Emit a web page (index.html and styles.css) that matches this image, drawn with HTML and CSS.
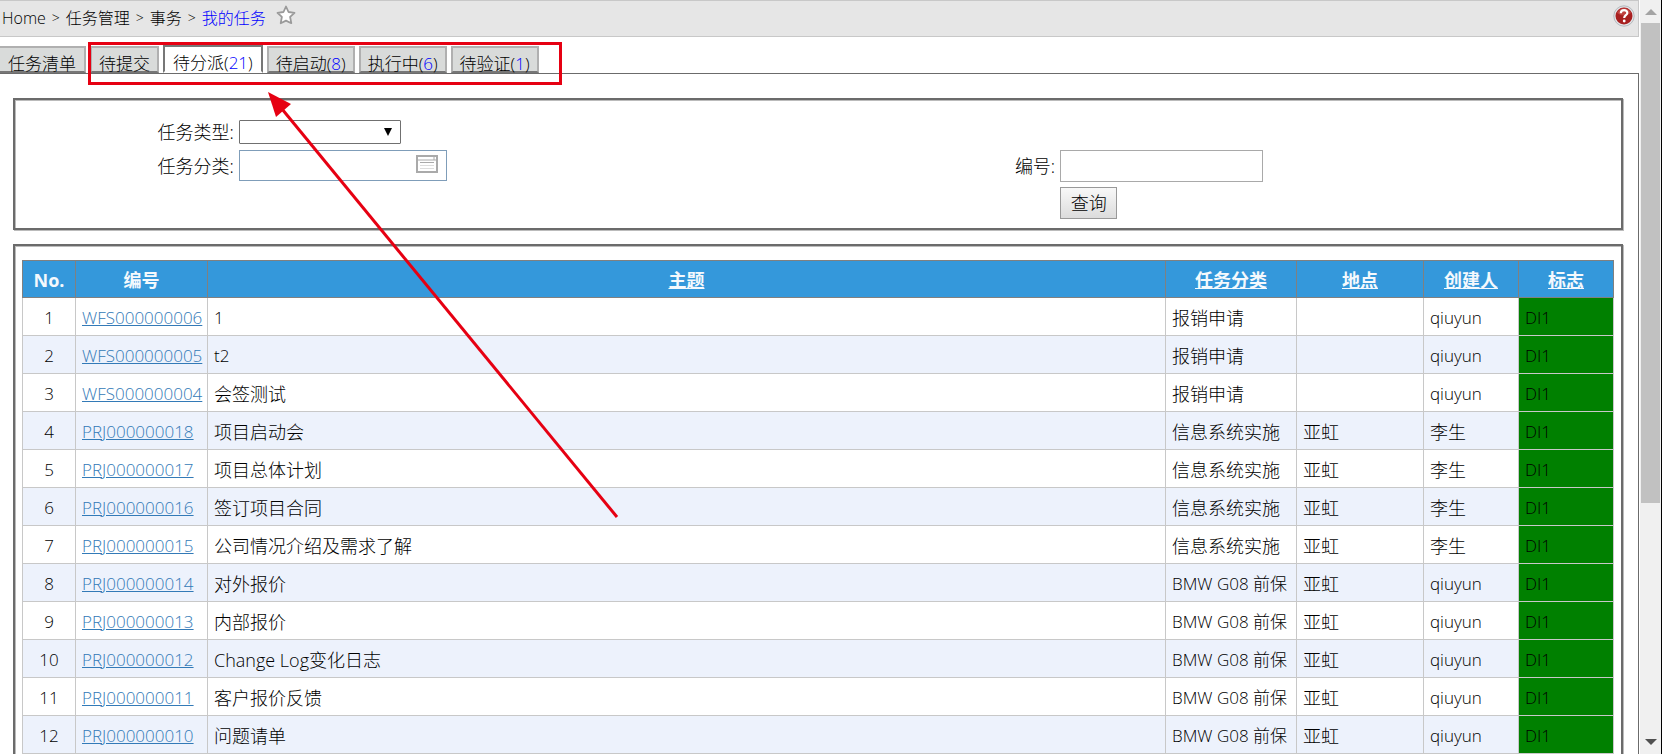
FILE: index.html
```html
<!DOCTYPE html>
<html lang="zh-CN">
<head>
<meta charset="utf-8">
<title>我的任务</title>
<link rel="stylesheet" href="styles.css">
</head>
<body>
<div class="window">
  <div class="page">
    <header class="topbar">
      <nav class="crumbs" aria-label="Breadcrumb">
        <span>Home</span><span class="sep">&gt;</span><span>任务管理</span><span class="sep">&gt;</span><span>事务</span><span class="sep">&gt;</span><a href="#">我的任务</a>
        <button class="icon-button star" aria-label="收藏">
          <svg width="20" height="20" viewBox="0 0 20 20"><path d="M10 1.500 12.500 7l6 .8-4.400 4.100 1.200 6.300L10 15.600l-5.300 2.600 1.200-6.300L1.500 7.800l6-.8z" fill="#fff" stroke="#9a9a9a" stroke-width="1.800" stroke-linejoin="round"/></svg>
        </button>
      </nav>
      <button class="icon-button" aria-label="帮助">
        <svg width="22" height="22" viewBox="0 0 22 22"><circle cx="11" cy="11" r="10.200" fill="#e3e6e9" stroke="#b4b9be"/><circle cx="11" cy="11" r="8.500" fill="#a82020"/><path d="M4 8a7.500 7.500 0 0 1 14 0q-7 5-14 0z" fill="#cf5a55" opacity=".6"/><path d="M7.800 8.300C7.800 4 14.500 4.200 14.300 8c-.1 2.200-3.100 2.300-3.100 5" fill="none" stroke="#fff" stroke-width="2.200"/><circle cx="11.200" cy="16" r="1.400" fill="#fff"/></svg>
      </button>
    </header>

    <nav class="tabs">
      <a class="tab first" href="#">任务清单</a>
      <a class="tab" href="#">待提交</a>
      <a class="tab active" href="#">待分派(<span class="count">21</span>)</a>
      <a class="tab" href="#">待启动(<span class="count">8</span>)</a>
      <a class="tab" href="#">执行中(<span class="count">6</span>)</a>
      <a class="tab" href="#">待验证(<span class="count">1</span>)</a>
    </nav>

    <main class="content">
      <form class="panel search">
        <label class="c1" for="type">任务类型:</label>
        <div class="select-wrap">
          <select id="type"><option></option></select>
          <svg class="caret" width="8" height="8" viewBox="0 0 8 8"><path d="M0 0h8L4 8z"/></svg>
        </div>
        <label class="c1" for="category">任务分类:</label>
        <div class="picker">
          <input id="category" type="text">
          <button type="button" class="icon-button" aria-label="选择分类">
            <svg width="22" height="18" viewBox="0 0 22 18"><path d="M1 1h20v16H1z" fill="#fff" stroke="#aaa" stroke-width="2"/><path d="M1 5h20M18 1v4" stroke="#aaa"/><path d="M4 7.500h14" stroke="#aaa"/><path d="M4 10.500h14M4 13.500h14" stroke="#ddd"/></svg>
          </button>
        </div>
        <label for="code">编号:</label>
        <input id="code" class="code" type="text">
        <button type="submit" class="query">查询</button>
      </form>

      <section class="panel results">
        <table>
          <colgroup><col class="w-no"><col class="w-id"><col><col class="w-cat"><col class="w-place"><col class="w-who"><col class="w-flag"></colgroup>
          <thead>
            <tr><th>No.</th><th>编号</th><th><a href="#">主题</a></th><th><a href="#">任务分类</a></th><th><a href="#">地点</a></th><th><a href="#">创建人</a></th><th><a href="#">标志</a></th></tr>
          </thead>
          <tbody>
            <tr><td>1</td><td><a href="#">WFS000000006</a></td><td>1</td><td class="zh">报销申请</td><td></td><td>qiuyun</td><td class="flag">DI1</td></tr>
            <tr><td>2</td><td><a href="#">WFS000000005</a></td><td>t2</td><td class="zh">报销申请</td><td></td><td>qiuyun</td><td class="flag">DI1</td></tr>
            <tr><td>3</td><td><a href="#">WFS000000004</a></td><td class="zh">会签测试</td><td class="zh">报销申请</td><td></td><td>qiuyun</td><td class="flag">DI1</td></tr>
            <tr><td>4</td><td><a href="#">PRJ000000018</a></td><td class="zh">项目启动会</td><td class="zh">信息系统实施</td><td class="zh">亚虹</td><td class="zh">李生</td><td class="flag">DI1</td></tr>
            <tr><td>5</td><td><a href="#">PRJ000000017</a></td><td class="zh">项目总体计划</td><td class="zh">信息系统实施</td><td class="zh">亚虹</td><td class="zh">李生</td><td class="flag">DI1</td></tr>
            <tr><td>6</td><td><a href="#">PRJ000000016</a></td><td class="zh">签订项目合同</td><td class="zh">信息系统实施</td><td class="zh">亚虹</td><td class="zh">李生</td><td class="flag">DI1</td></tr>
            <tr><td>7</td><td><a href="#">PRJ000000015</a></td><td class="zh">公司情况介绍及需求了解</td><td class="zh">信息系统实施</td><td class="zh">亚虹</td><td class="zh">李生</td><td class="flag">DI1</td></tr>
            <tr><td>8</td><td><a href="#">PRJ000000014</a></td><td class="zh">对外报价</td><td>BMW G08 前保</td><td class="zh">亚虹</td><td>qiuyun</td><td class="flag">DI1</td></tr>
            <tr><td>9</td><td><a href="#">PRJ000000013</a></td><td class="zh">内部报价</td><td>BMW G08 前保</td><td class="zh">亚虹</td><td>qiuyun</td><td class="flag">DI1</td></tr>
            <tr><td>10</td><td><a href="#">PRJ000000012</a></td><td class="zh">Change Log变化日志</td><td>BMW G08 前保</td><td class="zh">亚虹</td><td>qiuyun</td><td class="flag">DI1</td></tr>
            <tr><td>11</td><td><a href="#">PRJ000000011</a></td><td class="zh">客户报价反馈</td><td>BMW G08 前保</td><td class="zh">亚虹</td><td>qiuyun</td><td class="flag">DI1</td></tr>
            <tr><td>12</td><td><a href="#">PRJ000000010</a></td><td class="zh">问题请单</td><td>BMW G08 前保</td><td class="zh">亚虹</td><td>qiuyun</td><td class="flag">DI1</td></tr>
          </tbody>
        </table>
      </section>
    </main>
  </div>

  <div class="scrollbar" aria-hidden="true">
    <svg width="12" height="6" viewBox="0 0 12 6"><path d="M0 6h12L6 0z" fill="#a3a3a3"/></svg>
    <div class="track"><div class="thumb"></div></div>
    <svg width="12" height="6" viewBox="0 0 12 6"><path d="M0 0h12L6 6z" fill="#505050"/></svg>
  </div>

  <div class="highlight"></div>
  <svg class="arrow" width="360" height="430" viewBox="0 0 360 430"><path d="M14 17 349 425" stroke="#e60012" stroke-width="3"/><path d="M0 0 23 12 8 25z" fill="#e60012"/></svg>
</div>
</body>
</html>
```
FILE: styles.css
```css
* { box-sizing: border-box; }

body {
  margin: 0;
  overflow: hidden;
  background: #fff;
  color: #000;
  font: 300 17px/24px "Open Sans", "Noto Sans CJK SC", sans-serif;
}

input, select, button { font: inherit; color: inherit; margin: 0; }

.window {
  position: relative;
  display: flex;
  height: 100vh;
  padding-bottom: 2px;
}

.page {
  flex: 1;
  min-width: 0;
  overflow: hidden;
  display: flex;
  flex-direction: column;
}

.icon-button {
  display: block;
  padding: 0;
  border: 0;
  background: none;
}
.icon-button svg { display: block; }

/* breadcrumb bar */
.topbar {
  flex: none;
  display: flex;
  justify-content: space-between;
  height: 37px;
  padding: 4px 3px 0 2px;
  border: 1px solid #c8c8c8;
  border-left: 0;
  background: #e6e6e6;
  margin-right: 1px;
}
.topbar > .icon-button { align-self: flex-start; }
.crumbs { display: flex; font-size: 16px; line-height: 26px; }
.crumbs .sep { width: 20px; text-align: center; font-size: 14px; }
.crumbs a { color: #00f; text-decoration: none; }
.star { align-self: flex-start; margin-left: 10px; }

/* tabs */
.tabs {
  flex: none;
  display: flex;
  align-items: flex-end;
  gap: 4px;
  padding-top: 8px;
}
.tab {
  height: 27px;
  padding: 6px 7px 0;
  border: 2px solid #b0b0b0;
  border-bottom-color: #777;
  background: #d9dbda;
  color: #000;
  line-height: 20px;
  text-decoration: none;
  white-space: nowrap;
}
.tab.first { padding: 6px 8px 0; border-left: 0; }
.tab.active {
  height: 28px;
  padding: 6px 8px 0;
  border-color: #777;
  border-bottom-color: #fff;
  background: #fff;
}
.count { color: #00f; }

/* framed content */
.content {
  flex: 1;
  min-height: 0;
  overflow: hidden;
  display: flex;
  flex-direction: column;
  gap: 14px;
  padding: 24px 15px 0 13px;
  border-top: 1px solid #6b6b6b;
  border-right: 1px solid #6b6b6b;
  margin-right: 1px;
}
.panel {
  flex: none;
  border: 2px solid #6b6b6b;
  box-shadow: 1px 1px 0 #bbb, inset 1px 1px 0 #bbb;
}

.search {
  display: grid;
  grid-template-columns: 55fr 152fr 52fr 141fr;
  grid-template-rows: 24px 33px 32px;
  column-gap: 5px;
  row-gap: 5px;
  align-items: center;
  padding: 20px 0 9px;
  font-size: 18px;
}
.search label { text-align: right; }
.search .c1 { grid-column: 1; }
.select-wrap {
  display: flex;
  align-items: center;
  width: 162px;
  height: 24px;
  border: 1px solid #707070;
  border-radius: 1px;
}
.select-wrap select {
  flex: 1;
  min-width: 0;
  height: 22px;
  border: 0;
  background: none;
  appearance: none;
}
.caret { margin-right: 8px; }
.picker {
  display: flex;
  align-items: flex-start;
  width: 208px;
  height: 31px;
  padding: 4px 8px 0 2px;
  border: 1px solid #7f9db9;
}
.picker input {
  flex: 1;
  min-width: 0;
  height: 24px;
  border: 0;
  padding: 0;
  outline: 0;
}
.code {
  width: 203px;
  height: 32px;
  border: 1px solid #a9a9a9;
  padding: 2px 4px;
}
.query {
  grid-column: 4;
  justify-self: start;
  width: 57px;
  height: 32px;
  padding: 0;
  border: 1px solid #999;
  background: linear-gradient(#f8f8f8, #dcdcdc);
}

/* results */
.results { padding: 14px 7px 24px; }
table {
  width: 100%;
  table-layout: fixed;
  border-collapse: collapse;
}
.w-no { width: 53px; }
.w-id { width: 132px; }
.w-cat { width: 131px; }
.w-place { width: 127px; }
.w-who, .w-flag { width: 95px; }
th, td {
  height: 38px;
  padding: 2px 0 0 6px;
  border: 1px solid #c8c8c8;
  text-align: left;
  white-space: nowrap;
  line-height: 24px;
}
th {
  height: 37px;
  padding: 1px 0 0;
  border-color: #808080;
  background: #3498db;
  color: #f4f9fd;
  font-weight: 700;
  font-size: 18px;
  text-align: center;
}
th a { color: inherit; }
td:first-child { padding-left: 0; text-align: center; }
td a { color: #337ab7; }
tbody tr:nth-child(even) { background: #edf2fc; }
.zh { font-size: 18px; }
td.flag { background: #008000; }

/* scrollbar */
.scrollbar {
  flex: none;
  display: flex;
  flex-direction: column;
  align-items: center;
  width: 22px;
  padding: 9px 1px 9px;
  border-right: 1px solid #000;
  background: #f0f0f0;
}
.scrollbar svg { flex: none; }
.track { flex: 1; width: 100%; padding: 8px 0 10px; }
.thumb { height: 68%; background: #c1c1c1; }

/* annotations over the page */
.highlight {
  position: absolute;
  left: 88px;
  top: 42px;
  width: 474px;
  height: 43px;
  border: 3px solid #e60012;
}
.arrow {
  position: absolute;
  left: 268px;
  top: 92px;
}
```
